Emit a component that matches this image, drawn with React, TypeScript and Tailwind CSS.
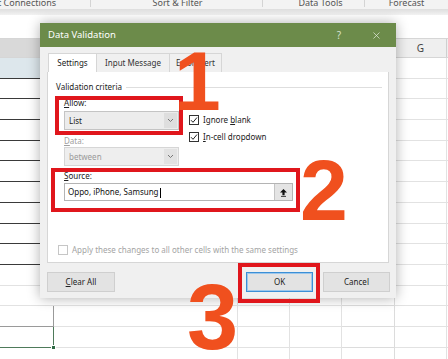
import { X } from 'lucide-react'

const ROWS = 15

function SheetRow({ i }: { i: number }) {
  let left = 'border-b border-[#e2e2e2]'
  if (i === 0) left = 'bg-[#dde7ec] border-b border-[#3a3a3a]'
  else if (i <= 9) left = 'border-b border-[#3a3a3a]'
  else if (i === 12) left = 'border-b border-r border-[#9a9a9a]'
  else if (i === 13) left = 'relative border-b border-r border-[#4e7a5a]'
  return (
    <div className="flex h-[20.7px] shrink-0">
      <div className={`w-[54px] shrink-0 ${left}`}>
        {i === 13 && <div className="absolute right-[-3px] bottom-[-3px] h-[5px] w-[5px] bg-[#2f6b45] border border-white" />}
      </div>
      <div className="w-[184px] shrink-0 border-b border-r border-[#e2e2e2]" />
      <div className="w-[52px] shrink-0 border-b border-r border-[#e2e2e2]" />
      <div className="w-[52px] shrink-0 border-b border-r border-[#e2e2e2]" />
      <div className="w-[53px] shrink-0 border-b border-r border-[#dcdcdc]" />
      <div className="w-[52px] shrink-0 border-b border-r border-[#e2e2e2]" />
      <div className="flex-1 border-b border-[#e2e2e2]" />
    </div>
  )
}

function Ribbon() {
  return (
    <div className="relative h-[9px] bg-[#f3f3f3] text-[9px] leading-[9px] text-[#555] overflow-hidden">
      <div className="flex h-full -mt-[2px]">
        <span className="w-[93px] border-r border-[#d4d4d4] -ml-[2px]">t Connections</span>
        <span className="w-[172px] border-r border-[#d4d4d4] text-center pl-[2px]">Sort &amp; Filter</span>
        <span className="w-[102px] border-r border-[#d4d4d4] text-center pl-[14px]">Data Tools</span>
        <span className="flex-1 text-center">Forecast</span>
      </div>
    </div>
  )
}

function Check({ on, dim }: { on?: boolean; dim?: boolean }) {
  return (
    <span className={`flex h-[10px] w-[10px] shrink-0 items-center justify-center border bg-white ${dim ? 'border-[#c6c6c6]' : 'border-[#333]'}`}>
      {on && (
        <svg width="8" height="8" viewBox="0 0 8 8">
          <path d="M1 4.2 L3 6.3 L7 1.5" fill="none" stroke="#222" strokeWidth="1" />
        </svg>
      )}
    </span>
  )
}

function Chevron() {
  return (
    <svg width="7" height="5" viewBox="0 0 7 5">
      <path d="M1 1 L3.5 3.5 L6 1" fill="none" stroke="#777" strokeWidth="1" />
    </svg>
  )
}

function Dropdown({ value, disabled }: { value: string; disabled?: boolean }) {
  return (
    <div className={`flex h-[19px] w-[115px] items-center border ${disabled ? 'border-[#d6d6d6] bg-[#eeeeee] text-[#9a9a9a]' : 'border-[#c4c4c4] bg-[#ececec] text-[#222]'}`}>
      <span className="flex-1 pl-[4px]">{value}</span>
      <span className={`flex h-[15px] w-[13px] mr-[1px] items-center justify-center ${disabled ? 'bg-[#e2e2e2]' : 'bg-[#dedede]'}`}>
        <Chevron />
      </span>
    </div>
  )
}

function Dialog() {
  return (
    <div className="absolute left-[40px] top-[23px] flex h-[275px] w-[356px] flex-col bg-[#f0f0f0] shadow-[0_0_12px_rgba(0,0,0,0.32)] text-[8px] leading-[12px] text-[#222]">
      <div className="flex h-[24px] shrink-0 items-center bg-[#6c8b4a] pl-[8px] pr-[14px] text-[9.5px] text-white">
        <span className="flex-1">Data Validation</span>
        <span className="mr-[30px] text-[10px] text-[#d8e2cf]">?</span>
        <X size={11} strokeWidth={1.5} className="text-[#e6ede0]" />
      </div>

      <div className="mt-[6px] flex h-[19px] shrink-0 pl-[8px]">
        <div className="flex w-[49px] items-center justify-center border border-b-0 border-[#d6d6d6] bg-white">Settings</div>
        <div className="flex w-[73px] items-center justify-center border-t border-r border-[#d6d6d6] text-[#333]">Input Message</div>
        <div className="flex w-[52px] items-center justify-center border-t border-r border-[#d6d6d6] text-[#333]">Error Alert</div>
      </div>

      <div className="mx-[7px] flex h-[191px] shrink-0 flex-col border border-t-0 border-[#d6d6d6] bg-white pt-[9px] pl-[8px] pr-[6px]">
        <div className="flex h-[12px] items-center gap-[4px]">
          <span>Validation criteria</span>
          <span className="h-px flex-1 bg-[#dedede]" />
        </div>

        <div className="ml-[8px] flex h-[37px] items-start">
          <div className="flex w-[115px] flex-col">
            <span className="mt-[4px] h-[12px]"><u>A</u>llow:</span>
            <div className="mt-[2px]"><Dropdown value="List" /></div>
          </div>
          <div className="ml-[10px] mt-[21px] flex flex-col gap-[5px]">
            <div className="flex h-[12px] items-center gap-[4px]">
              <Check on />
              <span>Ignore <u>b</u>lank</span>
            </div>
            <div className="flex h-[12px] items-center gap-[4px]">
              <Check on />
              <span><u>I</u>n-cell dropdown</span>
            </div>
          </div>
        </div>

        <div className="ml-[8px] flex flex-col">
          <span className="mt-[5px] h-[12px] text-[#a0a0a0]"><u>D</u>ata:</span>
          <Dropdown value="between" disabled />
          <span className="mt-[4px] h-[12px]"><u>S</u>ource:</span>
          <div className="mt-[1px] flex h-[18px] w-[229px] items-center border border-[#b4b4b4] bg-white pl-[3px]">
            <span className="flex-1 text-[#111]">Oppo, iPhone, Samsung<span className="ml-px inline-block h-[10px] w-px bg-black align-middle" /></span>
            <span className="flex h-[16px] w-[18px] items-center justify-center border-l border-[#c4c4c4] bg-[#e4e4e4]">
              <svg width="9" height="9" viewBox="0 0 9 9">
                <path d="M4.5 1 L8 4.6 L5.6 4.6 L5.6 7.2 L3.4 7.2 L3.4 4.6 L1 4.6 Z" fill="#111" />
                <path d="M2 8.4 H7" stroke="#111" strokeWidth="0.8" />
              </svg>
            </span>
          </div>
        </div>

        <div className="mt-[43px] ml-[2px] flex items-center gap-[4px] text-[#a4a4a4]">
          <Check dim />
          <span>Apply these changes to all other cells with the same settings</span>
        </div>
      </div>

      <div className="mt-[9px] flex shrink-0 pl-[7px] pr-[6px]">
        <button className="flex h-[20px] w-[68px] items-center justify-center border border-[#cfcfcf] bg-[#e3e3e3]">
          <span><u>C</u>lear All</span>
        </button>
        <div className="flex-1" />
        <button className="flex h-[20px] w-[67px] items-center justify-center border border-[#3c8fd6] bg-[#e3e3e3] shadow-[inset_0_0_0_1px_#9cc7ec]">
          OK
        </button>
        <button className="ml-[10px] flex h-[20px] w-[67px] items-center justify-center border border-[#cfcfcf] bg-[#e3e3e3]">
          Cancel
        </button>
      </div>
    </div>
  )
}

export default function App() {
  return (
    <div className="relative h-[359px] w-[448px] overflow-hidden bg-white font-['Noto_Sans',sans-serif]">
      <Ribbon />
      <div className="h-[6px] bg-gradient-to-b from-[#dedede] to-[#f2f2f2]" />
      <div className="h-[23px] bg-white" />
      <div className="flex h-[20px] border-t border-b border-[#d6d6d6] bg-[#efefef] text-[10px] text-[#444]">
        <div className="w-[54px] bg-[#d9d9d9]" />
        <div className="w-[341px]" />
        <div className="flex w-[52px] items-center justify-center border-r border-[#cfcfcf] pt-[1px]">G</div>
      </div>
      <div className="flex flex-col">
        {Array.from({ length: ROWS }).map((_, i) => (
          <SheetRow key={i} i={i} />
        ))}
      </div>

      <Dialog />

      {/* annotations */}
      <div className="absolute left-[55px] top-[96px] h-[39px] w-[128px] border-[4px] border-[#e0161c]" />
      <div className="absolute left-[51px] top-[168px] h-[44px] w-[249px] border-[4px] border-[#e0161c]" />
      <div className="absolute left-[238px] top-[263px] h-[40px] w-[82px] border-[4px] border-[#e0161c]" />

      <span className="absolute left-[174px] top-[39px] font-['Liberation_Sans',sans-serif] text-[84px] font-bold leading-none text-[#f0501e]">1</span>
      <span className="absolute left-[300px] top-[147px] font-['Liberation_Sans',sans-serif] text-[86px] font-bold leading-none text-[#f0501e]">2</span>
      <span className="absolute left-[187px] top-[271px] font-['Liberation_Sans',sans-serif] text-[92px] font-bold leading-none text-[#f0501e]">3</span>
    </div>
  )
}
